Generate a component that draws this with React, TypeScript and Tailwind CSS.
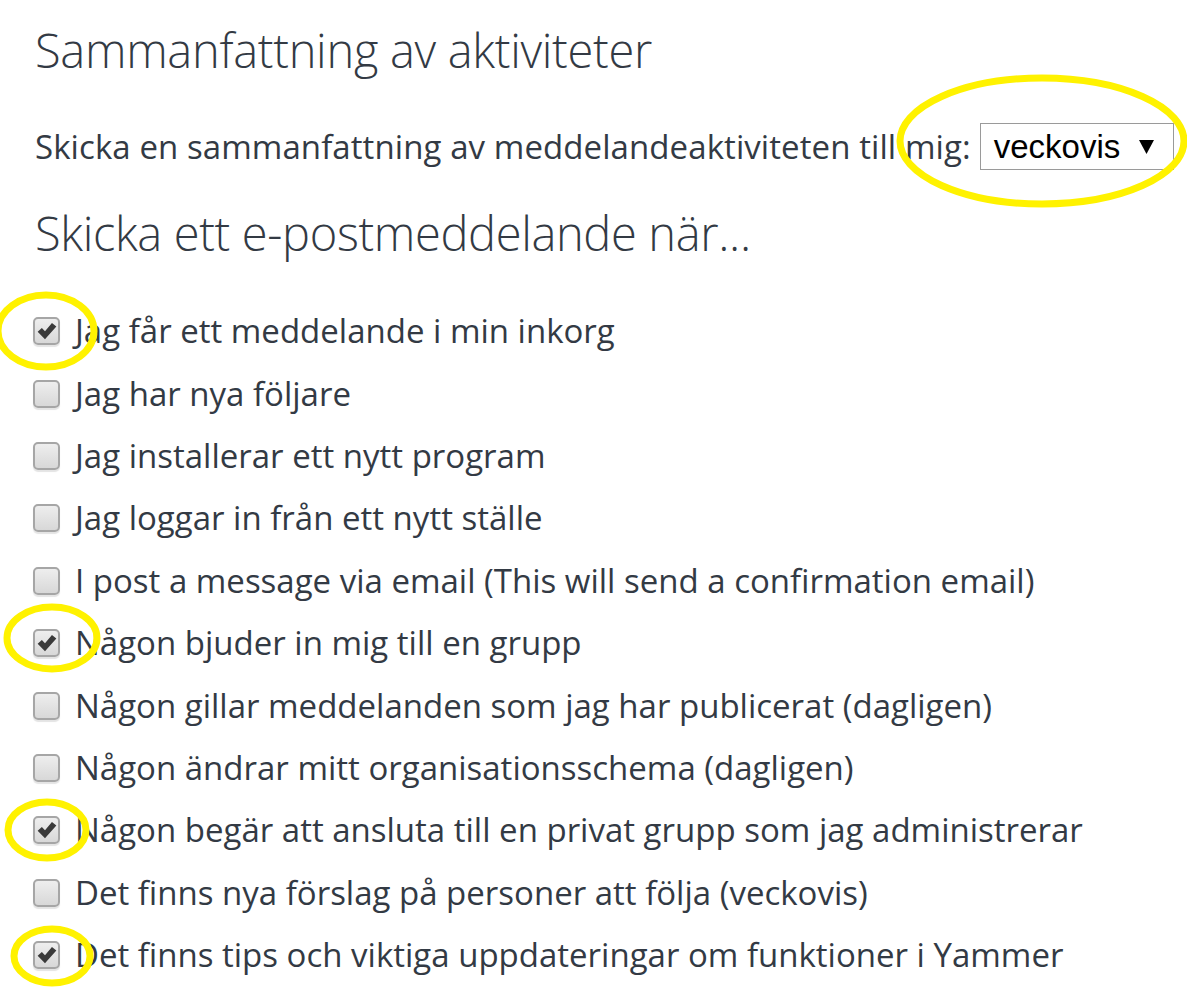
import React from "react";

const items: { label: string; checked: boolean }[] = [
  { label: "Jag får ett meddelande i min inkorg", checked: true },
  { label: "Jag har nya följare", checked: false },
  { label: "Jag installerar ett nytt program", checked: false },
  { label: "Jag loggar in från ett nytt ställe", checked: false },
  { label: "I post a message via email (This will send a confirmation email)", checked: false },
  { label: "Någon bjuder in mig till en grupp", checked: true },
  { label: "Någon gillar meddelanden som jag har publicerat (dagligen)", checked: false },
  { label: "Någon ändrar mitt organisationsschema (dagligen)", checked: false },
  { label: "Någon begär att ansluta till en privat grupp som jag administrerar", checked: true },
  { label: "Det finns nya förslag på personer att följa (veckovis)", checked: false },
  { label: "Det finns tips och viktiga uppdateringar om funktioner i Yammer", checked: true },
];

function Box({ checked }: { checked: boolean }) {
  return (
    <div className="relative w-[27px] h-[28px] shrink-0 rounded-[5px] border-2 border-[#a6a6a6] bg-gradient-to-b from-[#eeeeee] to-[#d8d8d8] shadow-[0_2px_1px_#e4e4e4] flex items-center justify-center">
      {checked && (
        <svg viewBox="0 0 24 24" className="w-[22px] h-[22px]">
          <path d="M1.8 12.8 L6.4 8.8 L9.8 12.4 L17.4 3.2 L22.2 7 L9.8 21 Z" fill="#3a3a3a" />
        </svg>
      )}
    </div>
  );
}

export default function App() {
  return (
    <div
      className="relative w-[1187px] h-[1001px] bg-white overflow-hidden text-[#333a44]"
      style={{ fontFamily: '"Open Sans", "Noto Sans", sans-serif' }}
    >
      <div className="pl-[35px] pt-[18px]">
        <h1 className="text-[47px] font-light leading-[64px] tracking-[-0.3px]">Sammanfattning av aktiviteter</h1>
        <div className="mt-[41px] flex items-center h-[47px]">
          <span className="text-[33px] leading-[47px] whitespace-nowrap tracking-[0.08px]">Skicka en sammanfattning av meddelandeaktiviteten till mig:</span>
          <div
            className="ml-[9px] w-[194px] h-[47px] shrink-0 border border-[#9a9a9a] flex items-center pl-[13px] text-black text-[33px]"
            style={{ fontFamily: '"Liberation Sans", Arial, sans-serif' }}
          >
            <span className="leading-[47px]">veckovis</span>
            <svg viewBox="0 0 15 14" className="ml-[19px] w-[15px] h-[14px]">
              <path d="M0 0 H15 L7.5 14 Z" fill="#000" />
            </svg>
          </div>
        </div>
        <h2 className="mt-[33px] text-[47px] font-light leading-[60px] tracking-[-0.35px]">Skicka ett e-postmeddelande när...</h2>
        <div className="mt-[37px] flex flex-col -ml-[2px]">
          {items.map((it, i) => (
            <div key={i} className="flex items-center gap-[15px] h-[62.4px]">
              <Box checked={it.checked} />
              <span className="text-[33px] leading-[44px] whitespace-nowrap">{it.label}</span>
            </div>
          ))}
        </div>
      </div>

      <svg className="absolute inset-0 pointer-events-none" width="1187" height="1001">
        <g fill="none" stroke="#fff200" strokeWidth="7">
          <ellipse cx="1042" cy="141" rx="142" ry="63" />
          <ellipse cx="46" cy="331" rx="48" ry="36" />
          <ellipse cx="52" cy="638" rx="45" ry="31" />
          <ellipse cx="47" cy="830" rx="39" ry="28" />
          <ellipse cx="52" cy="956" rx="38" ry="27" />
        </g>
      </svg>
    </div>
  );
}
